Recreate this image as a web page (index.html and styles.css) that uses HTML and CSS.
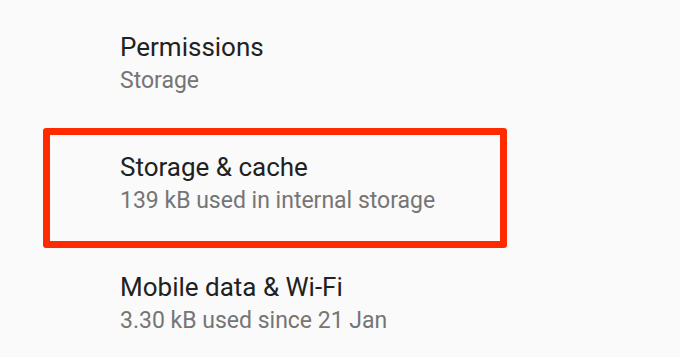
FILE: index.html
```html
<!DOCTYPE html>
<html>
<head>
<meta charset="utf-8">
<link rel="stylesheet" href="styles.css">
</head>
<body>
<ul class="list">
  <li class="row">
    <div class="title">Permissions</div>
    <div class="summary">Storage</div>
  </li>
  <li class="row row--marked">
    <div class="title">Storage &amp; cache</div>
    <div class="summary">139 kB used in internal storage</div>
  </li>
  <li class="row">
    <div class="title">Mobile data &amp; Wi-Fi</div>
    <div class="summary">3.30 kB used since 21 Jan</div>
  </li>
</ul>
</body>
</html>
```

FILE: styles.css
```css
html, body {
  margin: 0;
  padding: 0;
  background: #fafafa;
  overflow: hidden;
}
body {
  width: 680px;
  height: 357px;
  font-family: Roboto, "Noto Sans", sans-serif;
}
.list {
  list-style: none;
  margin: 0;
  padding: 8px 0 0 0;
}
.row {
  box-sizing: border-box;
  height: 120px;
  padding: 23px 0 0 120px;
}
.row--marked {
  margin-left: 43px;
  width: 464px;
  border: 7px solid #ff2a00;
  border-radius: 3px;
  padding: 16px 0 0 70px;
}
.title {
  font-size: 26px;
  line-height: 32px;
  color: #212121;
}
.summary {
  font-size: 23px;
  line-height: 36px;
  color: #757575;
}
```
